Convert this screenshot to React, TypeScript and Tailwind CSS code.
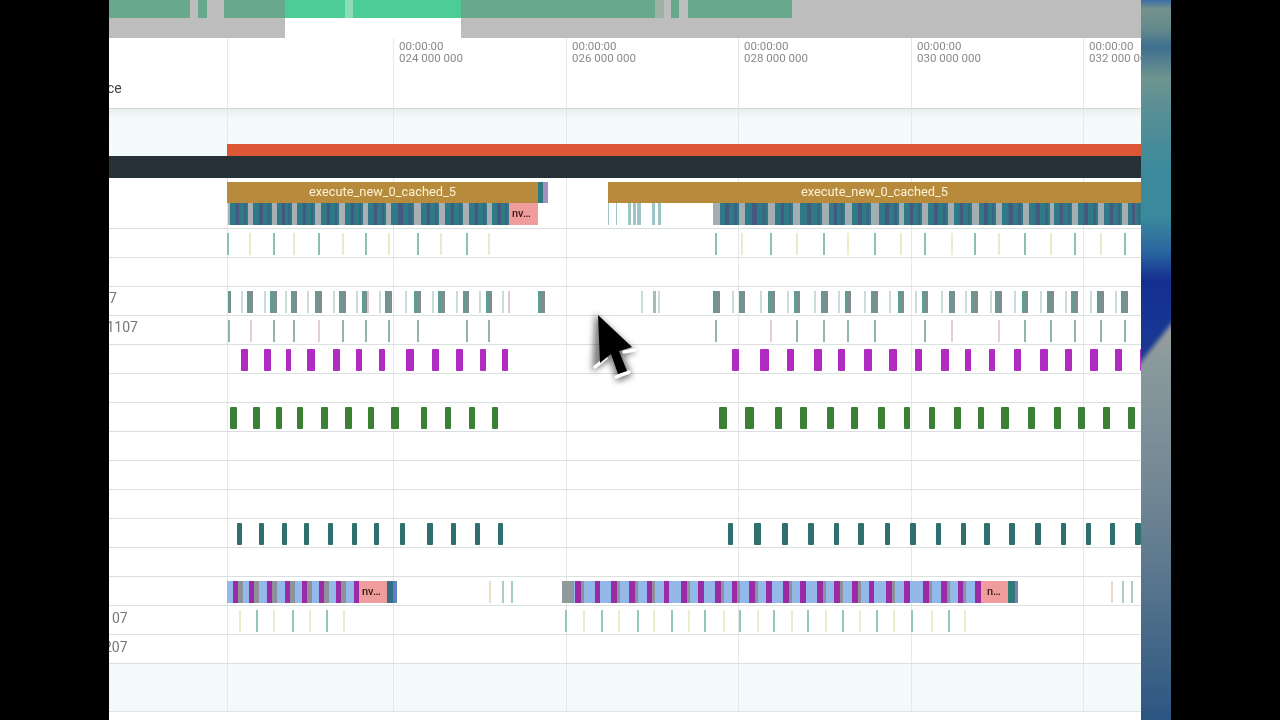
const ORIGIN = 227;
const GRID = [227, 393, 566, 738, 911, 1083];
const TICKS = [
  [393, "024 000 000"],
  [566, "026 000 000"],
  [738, "028 000 000"],
  [911, "030 000 000"],
  [1083, "032 000 000"],
] as const;

type Seg = [number, string];
const OVERVIEW: Seg[] = [
  [81, "bg-[#69a98b]"], [8, "bg-[#bdbdbd]"], [9, "bg-[#69a98b]"], [17, "bg-[#bdbdbd]"], [61, "bg-[#69a98b]"],
  [60, "bg-[#4bcd95]"], [8, "bg-[#8fdcb9]"], [108, "bg-[#4bcd95]"], [194, "bg-[#69a98b]"], [9, "bg-[#9db3a6]"],
  [7, "bg-[#bdbdbd]"], [8, "bg-[#69a98b]"], [9, "bg-[#bdbdbd]"], [104, "bg-[#69a98b]"], [349, "bg-[#bdbdbd]"],
];

// [x, width]
type M = [number, number];
const span = (pairs: number[][]): M[] => pairs.map(([a, b]) => [a, b - a]);

const PURPLE = span([[241,248],[264,271],[286,291],[307,315],[333,340],[356,362],[379,385],[406,414],[432,439],[456,463],[480,486],[502,508],
  [732,739],[760,769],[787,793.5],[814,822],[838,845],[864,871.5],[889,897],[915,922],[941,948.5],[965,971],[989,995],[1013.5,1021],[1040,1048],[1065,1071.5],[1090,1098],[1115,1122],[1140,1142]]);
const GREEN = span([[230,237],[253,260],[276,282],[297,303],[321,328],[345,352],[368,374],[391,399],[421,427],[445,451],[469,475],[492,498],
  [719,727],[744.5,754],[775,782],[800,807],[827,833.5],[851,857.5],[877.5,884.5],[903.5,910],[928.5,935],[954,961],[978,984],[1001,1009],[1027.5,1035],[1054,1060.5],[1078,1085],[1103,1110],[1128,1135]]);
const DTEAL = span([[237,241.5],[259,264],[282,287],[304,309],[328,333],[352,357],[374,379],[400,405],[427,433],[451,456],[475,480],[498,503],
  [728,733],[754,761],[782,788],[808,814],[834,839],[858,864],[885,890],[910,915.5],[936,941],[961,966],[984,989.5],[1009,1014.5],[1035,1040.5],[1060.5,1066],[1085.5,1091],[1110,1115],[1135,1141]]);
const THICK = span([[227.5,231],[247,253],[270,277],[291,297],[315,322],[339,346],[362,369],[385,392],[414,421],[438,445],[463,469],[486,492],[538,545],
  [712.5,720],[739,745],[768,775],[793.5,800],[821,828],[845,850.5],[871,878],[897.5,903.5],[922,928],[948.5,955],[971,978],[995,1001.5],[1022,1028],[1047,1054],[1071,1078],[1097,1104],[1121,1128]]);
const THICK_LIGHT = [241,264,285,307,333,356,379,405,432,456,479,502,641,658,732,760,787,814,838,863.5,889,915,941,965,990,1014,1040,1065,1090,1115];
const THICK_THIN_EXTRA: M[] = [[653, 3]];
const PINKISH = [508, 367];

const R1_TEAL = [227,273,318,365,417,466,715,770,823,874,924,974,1024,1074,1124];
const R1_YEL = [249,293,342,388,440,488,741,796,847,900,951,998,1050,1100];
const R4_DARK = [228,273,293,342,365,388,417,466,488,715,796,823,847,874,924,1024,1050,1074,1100,1124];
const R4_PINK = [250,318,770,951,998];
const R14_TEAL = [256,292,326,565,601,637,671,704,739,773,807,842,876,911,948];
const R14_YEL = [239,273,309,343,583,618,653,688,723,757,791,825,859,893,931,964];

const FRAG_L = span([[230,248],[253,272],[277,292],[297,315],[321,339],[345,363],[368,386],[391,414],[421,439],[445,463],[469,487],[492,509]]);
const FRAG_R = span([[719,738.5],[745,768],[775,793],[800,822],[828.5,845],[851.5,871],[878.5,898.5],[904,921.5],[928,948],[954,972],[979,996],[1002,1023],[1028.5,1049.5],[1054,1072],[1078,1097.5],[1103.5,1122],[1128,1141]]);

const MULTI_L = [233,249,267,285,302,319,336,353.5];
const MULTI_R = [575,594.5,611,629,646.5,663.5,681,698,715,731.5,749,766,783,800,817,834,852,868.5,886,904,923,941,957.5,975];

function Lines() {
  return (
    <>
      {GRID.map((x) => (
        <div key={x} className="absolute top-0 bottom-0 w-px bg-[#e6e8e8]" style={{ left: x - ORIGIN }} />
      ))}
    </>
  );
}

function Bars({ items, className }: { items: M[]; className: string }) {
  return (
    <>
      {items.map(([x, w]) => (
        <div key={x} className={`absolute top-[3.5px] h-[22px] ${className}`} style={{ left: x - ORIGIN, width: w }} />
      ))}
    </>
  );
}

const thin = (xs: number[]): M[] => xs.map((x) => [x, 2]);

function Row({ label, labelClass, children }: { label?: string; labelClass?: string; children?: React.ReactNode }) {
  return (
    <div className="flex h-[29px] border-b border-[#dcdfdf] bg-white">
      <div className="w-[118px] shrink-0 overflow-hidden pb-[6px] flex items-center">
        {label && <span className={`text-[14px] leading-5 text-[#777] whitespace-nowrap ${labelClass ?? ""}`}>{label}</span>}
      </div>
      <div className="relative flex-1 overflow-hidden">
        <Lines />
        {children}
      </div>
    </div>
  );
}

function Cursor() {
  return (
    <svg className="absolute left-[580px] top-[300px] w-[80px] h-[90px] z-20" viewBox="580 300 80 90">
      <defs>
        <filter id="soft" x="-40%" y="-40%" width="180%" height="180%"><feGaussianBlur stdDeviation="3" /></filter>
        <filter id="soft2"><feGaussianBlur stdDeviation="0.7" /></filter>
      </defs>
      <path d="M595 314 L636 352 L624 356 L632 376 L617 382 L610 360 L592 372 Z" fill="#000" opacity="0.5" filter="url(#soft)" />
      <g stroke="#fff" strokeWidth="3.5" strokeLinecap="round" filter="url(#soft2)">
        <path d="M595 367 L606 358" />
        <path d="M616 377 L629 372" />
        <path d="M624 352 L635 350" />
      </g>
      <path d="M598 315 L632 347 L619 351 L627 371 L618 374 L611 354 L600 363 Z" fill="#000" filter="url(#soft2)" />
    </svg>
  );
}

function Wallpaper() {
  return (
    <svg className="w-full h-full block" viewBox="0 0 30 720" preserveAspectRatio="none">
      <defs>
        <linearGradient id="wa" x1="0" y1="0" x2="0" y2="1">
          <stop offset="0" stopColor="#3b6ea5" />
          <stop offset="0.012" stopColor="#74918d" />
          <stop offset="0.04" stopColor="#658a8c" />
          <stop offset="0.065" stopColor="#3f6f8f" />
          <stop offset="0.11" stopColor="#6e9590" />
          <stop offset="0.15" stopColor="#5a8f95" />
          <stop offset="0.24" stopColor="#3a8a9c" />
          <stop offset="0.3" stopColor="#3a8a9c" />
          <stop offset="0.35" stopColor="#2a65a0" />
          <stop offset="0.39" stopColor="#152f90" />
          <stop offset="0.5" stopColor="#1a3a95" />
        </linearGradient>
        <linearGradient id="wb" x1="0" y1="0" x2="0" y2="1">
          <stop offset="0" stopColor="#a09f9f" />
          <stop offset="0.1" stopColor="#8a9a9c" />
          <stop offset="0.45" stopColor="#708594" />
          <stop offset="0.72" stopColor="#4f6f8a" />
          <stop offset="1" stopColor="#2a5582" />
        </linearGradient>
        <filter id="wf"><feGaussianBlur stdDeviation="2" /></filter>
      </defs>
      <rect width="30" height="720" fill="url(#wa)" />
      <path d="M-5 368 L35 318 L35 725 L-5 725 Z" fill="url(#wb)" filter="url(#wf)" />
    </svg>
  );
}

export default function App() {
  return (
    <div className="relative flex h-[720px] w-[1280px] overflow-hidden bg-black font-['Roboto',sans-serif]">
      <div className="w-[109px] shrink-0 bg-black" />
      <div className="relative z-0 w-[1032px] shrink-0 bg-white overflow-hidden blur-[0.5px]">
        {/* overview */}
        <div className="h-[38px] bg-[#bdbdbd]">
          <div className="flex h-[18px]">
            {OVERVIEW.map(([w, c], i) => (
              <div key={i} className={c} style={{ width: w }} />
            ))}
          </div>
          <div className="flex h-[20px]">
            <div className="w-[176px]" />
            <div className="w-[176px] bg-white" />
          </div>
        </div>

        {/* header */}
        <div className="flex h-[71px] border-b border-[#d4d7d7] bg-white">
          <div className="w-[118px] shrink-0 overflow-hidden flex items-end pb-[10px]">
            <span className="-ml-[2px] text-[14px] leading-5 text-[#444]">ce</span>
          </div>
          <div className="relative flex-1 overflow-hidden">
            <Lines />
            {TICKS.map(([x, t]) => (
              <div key={x} className="absolute top-[2px] text-[11.5px] leading-[12px] text-[#8a8a8a] whitespace-nowrap" style={{ left: x - ORIGIN + 6 }}>
                <div>00:00:00</div>
                <div>{t}</div>
              </div>
            ))}
          </div>
        </div>

        {/* band + red bar */}
        <div className="flex h-[47px] bg-gradient-to-b from-[#e9eeee] via-[#f3fafa] via-20% to-[#f3fbfb]">
          <div className="w-[118px] shrink-0" />
          <div className="relative flex-1 flex flex-col justify-end">
            <Lines />
            <div className="relative h-[12px] bg-[#dd5737]" />
          </div>
        </div>
        <div className="h-[22px] bg-[#263238]" />

        {/* gold row */}
        <div className="flex h-[51px] border-b border-[#dcdfdf] bg-white">
          <div className="w-[118px] shrink-0" />
          <div className="relative flex-1 overflow-hidden">
            <Lines />
            <div className="absolute left-0 top-[4px] h-[21px] w-[311px] bg-[#b78a3c] pb-[2px] flex items-center justify-center text-[12.8px] text-[#fbf3d6] whitespace-nowrap">execute_new_0_cached_5</div>
            <div className="absolute left-[311px] top-[4px] h-[21px] w-[5px] bg-[#2f7a80]" />
            <div className="absolute left-[316px] top-[4px] h-[21px] w-[5px] bg-[#a58ec0]" />
            <div className="absolute left-[381px] right-0 top-[4px] h-[21px] bg-[#b78a3c] pb-[2px] flex items-center justify-center text-[12.8px] text-[#fbf3d6] whitespace-nowrap">execute_new_0_cached_5</div>

            {/* fragments */}
            <div className="absolute left-[1px] top-[25px] h-[22px] w-[281px] bg-[#a8b0b4]" />
            {FRAG_L.concat(FRAG_R).map(([x, w]) => (
              <div key={x} className="absolute top-[25px] h-[22px] bg-[linear-gradient(90deg,#2f7a86_0%,#2f7a86_30%,#43597f_32%,#43597f_50%,#2f7a86_52%,#2f7a86_75%,#3a6480_77%,#3a6480_88%,#2f7a86_90%)]" style={{ left: x - ORIGIN, width: w }} />
            ))}
            <div className="absolute left-[282px] top-[25px] h-[22px] w-[29px] bg-[#ee9d9c] text-[11px] leading-[22px] text-[#3a1518] pl-[3px] font-medium">nv…</div>
            {[[607.5,1],[616,1],[628,3],[632.5,3],[637,4],[652,3],[657.5,3]].map(([x, w]) => (
              <div key={x} className="absolute top-[25px] h-[22px] bg-[#9ec5c6]" style={{ left: x - ORIGIN, width: w }} />
            ))}
            {[[713,6.5],[738.5,6.5],[768,7],[793,7],[822,6.5],[845,6.5],[871,7.5],[898.5,5.5],[921.5,6.5],[948,6],[972,7],[996,6],[1023,5.5],[1049.5,4.5],[1072,6],[1097.5,6],[1122,6]].map(([x, w]) => (
              <div key={x} className="absolute top-[25px] h-[22px] bg-[#a3aeb2]" style={{ left: x - ORIGIN, width: w }} />
            ))}
          </div>
        </div>

        {/* rows */}
        <Row>
          <Bars items={thin(R1_TEAL)} className="bg-[#8cc0b6]" />
          <Bars items={thin(R1_YEL)} className="bg-[#efe9c4]" />
        </Row>
        <Row />
        <Row label="7">
          <Bars items={thin(THICK_LIGHT)} className="bg-[#c9dcda]" />
          <Bars items={THICK} className="bg-[linear-gradient(90deg,#5f9d92_0%,#5f9d92_45%,#808c90_47%,#808c90_100%)]" />
          <Bars items={THICK_THIN_EXTRA} className="bg-[#a4bdb9]" />
          <Bars items={thin(PINKISH)} className="bg-[#dcc8d0]" />
        </Row>
        <Row label="1107" labelClass="-ml-[2.5px]">
          <Bars items={thin(R4_DARK)} className="bg-[#8fb6b0]" />
          <Bars items={thin(R4_PINK)} className="bg-[#e4ced6]" />
        </Row>
        <Row>
          <Bars items={PURPLE} className="rounded-[1px] bg-[#b02cc0]" />
        </Row>
        <Row />
        <Row>
          <Bars items={GREEN} className="rounded-[1px] bg-[#3a8035]" />
        </Row>
        <Row />
        <Row />
        <Row />
        <Row>
          <Bars items={DTEAL} className="rounded-[1px] bg-[#2f6f6e]" />
        </Row>
        <Row />
        <Row>
          {/* left multi */}
          <div className="absolute left-0 top-[3.5px] h-[22px] w-[133px] bg-[#93b8ea]" />
          <Bars items={MULTI_L.map((x) => [x, 5] as M)} className="bg-[#9a2aa6]" />
          <Bars items={MULTI_L.slice(0, 7).map((x) => [x + 5, 4.5] as M)} className="bg-[#8f9098]" />
          <div className="absolute left-[132px] top-[3.5px] h-[22px] w-[28px] bg-[#ee9d9c] text-[11px] leading-[22px] text-[#3a1518] pl-[3px] font-medium">nv…</div>
          <div className="absolute left-[160px] top-[3.5px] h-[22px] w-[6px] bg-[#2f6f86]" />
          <div className="absolute left-[166px] top-[3.5px] h-[22px] w-[4px] bg-[#5f7fc0]" />
          <Bars items={thin([489])} className="bg-[#e9dcc4]" />
          <Bars items={thin([502, 511])} className="bg-[#a6cec8]" />
          {/* right multi */}
          <div className="absolute left-[335px] top-[3.5px] h-[22px] w-[419px] bg-[#93b8ea]" />
          <Bars items={[[562, 6], [568, 6]] as M[]} className="bg-[#8f9a9c]" />
          <Bars items={MULTI_R.map((x) => [x, 5.5] as M)} className="bg-[#9a2aa6]" />
          <Bars items={MULTI_R.slice(0, 23).filter((_, i) => i % 2 === 0 || i % 3 === 0).map((x) => [x + 5.5, 3] as M)} className="bg-[#8f9098]" />
          <div className="absolute left-[754px] top-[3.5px] h-[22px] w-[28px] bg-[#ee9d9c] text-[11px] leading-[22px] text-[#3a1518] pl-[6px] font-medium">n…</div>
          <div className="absolute left-[781px] top-[3.5px] h-[22px] w-[7px] bg-[#2f7a78]" />
          <div className="absolute left-[788px] top-[3.5px] h-[22px] w-[3px] bg-[#7f7fb0]" />
          <Bars items={thin([1111])} className="bg-[#e9dcc4]" />
          <Bars items={thin([1122, 1131])} className="bg-[#b0cac6]" />
        </Row>
        <Row label="07" labelClass="pl-[3px] mt-[2px]">
          <Bars items={thin(R14_TEAL)} className="bg-[#92c8bb]" />
          <Bars items={thin(R14_YEL)} className="bg-[#f0ebc8]" />
        </Row>
        <Row label="207" labelClass="-ml-[5px] mt-[2px]" />

        {/* bottom band */}
        <div className="flex h-[48px] border-b border-[#e0e3e3] bg-[#f3fbfa]">
          <div className="w-[118px] shrink-0" />
          <div className="relative flex-1">
            <Lines />
          </div>
        </div>
      </div>
      <div className="relative w-[30px] shrink-0 h-full">
        <Wallpaper />
      </div>
      <div className="flex-1 bg-black" />
      <Cursor />
    </div>
  );
}
